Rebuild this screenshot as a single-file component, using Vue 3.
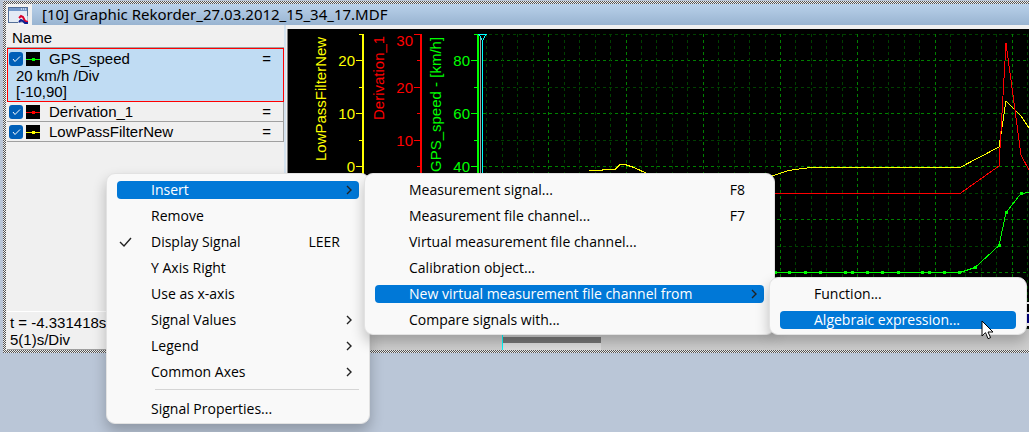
<script setup>
const signals = [
  { name: 'GPS_speed', color: '#00ff00', selected: true, details: ['20 km/h /Div', '[-10,90]'] },
  { name: 'Derivation_1', color: '#ff0000' },
  { name: 'LowPassFilterNew', color: '#ffff00' },
];

const mainMenu = [
  { label: 'Insert', sub: true, active: true },
  { label: 'Remove' },
  { label: 'Display Signal', key: 'LEER', checked: true },
  { label: 'Y Axis Right' },
  { label: 'Use as x-axis' },
  { label: 'Signal Values', sub: true },
  { label: 'Legend', sub: true },
  { label: 'Common Axes', sub: true },
  { label: 'Signal Properties...', separated: true },
];

const insertMenu = [
  { label: 'Measurement signal...', key: 'F8' },
  { label: 'Measurement file channel...', key: 'F7' },
  { label: 'Virtual measurement file channel...' },
  { label: 'Calibration object...' },
  { label: 'New virtual measurement file channel from', sub: true, active: true },
  { label: 'Compare signals with...' },
];

const channelMenu = [
  { label: 'Function...' },
  { label: 'Algebraic expression...', active: true },
];

const menus = [
  { id: 'main', items: mainMenu },
  { id: 'insert', items: insertMenu },
  { id: 'channel', items: channelMenu },
];

// grid lines, every second row and every fifth column is a major one
const rows = [5, 31, 58, 84, 111, 137, 164, 190, 217, 243, 270, 296].map((y, i) => ({
  y,
  major: i % 2 === 1,
}));
const columns = Array.from({ length: 36 }, (_, i) => ({
  x: Math.round(183 + 15.45 * (i + 1)),
  major: (i + 1) % 5 === 0,
}));

const ticks = [5, 31, 58, 84, 111, 137];

const axes = [
  {
    name: 'LowPassFilterNew', color: '#ffff00', x: 75, titleX: 38, titleY: 132, odd: 1,
    labels: [{ text: '20', y: 37 }, { text: '10', y: 90 }, { text: '0', y: 143 }],
  },
  {
    name: 'Derivation_1', color: '#ff0000', x: 133, titleX: 96, titleY: 91, odd: 0,
    labels: [{ text: '30', y: 17 }, { text: '20', y: 64 }, { text: '10', y: 117 }],
  },
  {
    name: 'GPS_speed - [km/h]', color: '#00ff00', x: 190, titleX: 153, titleY: 143, odd: 1,
    labels: [{ text: '80', y: 37 }, { text: '60', y: 90 }, { text: '40', y: 143 }],
  },
];

const samples = [
  [486, 243], [500, 243], [516, 243], [531, 243], [556, 243], [563, 243], [578, 243],
  [593, 243], [609, 243], [633, 243], [640, 243], [655, 243], [670, 243], [686, 238],
  [710, 216], [717, 183], [732, 164],
];
</script>

<template>
  <main class="desktop">
    <section class="window">
      <header class="title-row">
        <svg class="app-icon" width="20" height="20" viewBox="0 0 20 20">
          <rect x="0.5" y="2.500" width="19" height="15" fill="#e4ebf5" stroke="#536f98" />
          <rect x="1" y="3" width="18" height="3" fill="#7599ca" />
          <path d="M13 4h1M15 4h1M17 4h1" stroke="#fff" />
          <path d="M10 11h20v12H10z" fill="#f6f8fc" opacity="0.6" />
          <path d="M11 13l2-2 2 1 2 4 3 1" fill="none" stroke="#d8002c" stroke-width="2" />
          <path d="M11 17l2-2 2 1 2 2h3" fill="none" stroke="#102090" stroke-width="2" />
        </svg>
        <h1 class="title">[10] Graphic Rekorder_27.03.2012_15_34_17.MDF</h1>
      </header>

      <div class="content">
        <aside class="sidebar">
          <div class="list-header">Name</div>
          <div
            v-for="signal in signals"
            :key="signal.name"
            :class="['signal', { selected: signal.selected }]"
          >
            <label class="signal-row">
              <span class="check-box">
                <input type="checkbox" class="signal-check" checked />
                <svg class="check-mark" width="14" height="14" viewBox="0 0 14 14">
                  <path d="M4 7l2 2.500 5-5" />
                </svg>
              </span>
              <svg class="signal-icon" width="14" height="14" viewBox="0 0 14 14">
                <rect width="14" height="14" fill="#000" />
                <path d="M0 7.500h14" :stroke="signal.color" />
                <rect x="6" y="6" width="3" height="3" :fill="signal.color" />
              </svg>
              <span class="signal-name">{{ signal.name }}</span>
              <span>=</span>
            </label>
            <div v-for="line in signal.details" :key="line" class="signal-detail">{{ line }}</div>
          </div>
          <div class="time-info">
            <div>t = -4.331418s</div>
            <div>5(1)s/Div</div>
          </div>
        </aside>

        <div class="plot-area">
          <svg class="plot" viewBox="0 0 741 300" preserveAspectRatio="xMinYMin slice">
            <rect width="741" height="300" fill="#000" />
            <g shape-rendering="crispEdges" stroke-dasharray="3 3">
              <path
                v-for="row in rows"
                :key="row.y"
                :d="`M195 ${row.y + 0.5}H741`"
                :stroke="row.major ? '#008000' : '#004000'"
              />
              <path
                v-for="column in columns"
                :key="column.x"
                :d="`M${column.x + 0.5} 5V300`"
                :stroke="column.major ? '#008000' : '#004000'"
              />
            </g>
            <g v-for="axis in axes" :key="axis.name">
              <g shape-rendering="crispEdges" :stroke="axis.color">
                <path :d="`M${axis.x} 5V300`" stroke-width="2" />
                <path
                  v-for="(tick, i) in ticks"
                  :key="tick"
                  :d="`M${axis.x - (i % 2 === axis.odd ? 7 : 4)} ${tick + 0.5}H${axis.x}`"
                />
              </g>
              <text
                v-for="label in axis.labels"
                :key="label.text"
                :x="axis.x - 8"
                :y="label.y"
                :fill="axis.color"
                text-anchor="end"
              >{{ label.text }}</text>
              <text
                :fill="axis.color"
                :transform="`translate(${axis.titleX} ${axis.titleY}) rotate(-90)`"
              >{{ axis.name }}</text>
            </g>
            <g fill="none" shape-rendering="crispEdges">
              <path d="M192.500 5V300" stroke="#a0a0a0" />
              <path d="M194.500 5V300" stroke="#00ffff" />
              <path d="M191 5.500H198L194.500 12z" fill="#000" stroke="#00ffff" />
              <path
                d="M301 141.500H314L315 140.500H327L332 135.500H337L346 138.500L359 144.500L380 153L420 160L460 153L484 147L501 141.500L514 139.500L525 138.500H672L711 118L718 72L733 87L741 99"
                stroke="#ffff00"
              />
              <path d="M195 164.500H672L711 137L718 14L733 126L741 141" stroke="#ff0000" />
              <path
                d="M195 243.500H672L687 238.500L711 216.500L718 183.500L733 164.500L741 163.500"
                stroke="#00ff00"
              />
            </g>
            <rect
              v-for="point in samples"
              :key="point[0]"
              :x="point[0]"
              :y="point[1] - 1"
              width="3"
              height="3"
              fill="#00ff00"
            />
            <rect x="738" y="273" width="3" height="24" fill="#fff" />
            <rect x="738" y="275" width="3" height="8" fill="#000" />
            <rect x="738" y="285" width="3" height="9" fill="#000080" />
          </svg>
          <div class="scroll-track">
            <div class="scroll-thumb"></div>
          </div>
        </div>
      </div>
    </section>

    <nav v-for="menu in menus" :key="menu.id" :class="['menu', `menu-${menu.id}`]">
      <template v-for="item in menu.items" :key="item.label">
        <hr v-if="item.separated" class="separator" />
        <button type="button" :class="['menu-item', { active: item.active }]">
          <svg v-if="item.checked" class="check" width="14" height="12" viewBox="0 0 14 12">
            <path d="M1 6l4 4 7-8" />
          </svg>
          <span class="menu-label">{{ item.label }}</span>
          <span v-if="item.key" class="shortcut">{{ item.key }}</span>
          <svg v-if="item.sub" class="arrow" width="6" height="10" viewBox="0 0 6 10">
            <path d="M1 1l4 4-4 4" />
          </svg>
        </button>
      </template>
    </nav>

    <svg class="cursor" width="13" height="20" viewBox="0 0 13 20">
      <path d="M1 1v15l3.500-3.300 2.600 6 2.500-1.100-2.600-5.600h5z" fill="#fff" stroke="#000" />
    </svg>
  </main>
</template>

<style>
body {
  margin: 0;
  background: #bac6d7;
}
</style>

<style scoped>
.desktop {
  position: relative;
  min-height: 100vh;
  box-sizing: border-box;
  padding: 1px 0 0 3px;
  overflow: hidden;
  background: #bac6d7;
  color: #000;
  font-family: "Liberation Sans", Arial, sans-serif;
  font-size: 15px;
}

/* dithered window frame */
.window {
  padding: 3px 0 3px 3px;
  background: repeating-conic-gradient(#555 0 25%, #eee 0 50%) 0 0 / 2px 2px;
}

.title-row {
  display: flex;
  height: 21px;
  background: #f0f0f0;
}

.app-icon {
  flex: none;
  margin: 1px 4px 0 2px;
}

.title {
  flex: 1;
  margin: 0;
  padding-left: 10px;
  background: linear-gradient(#b9d1ea, #99b4d1);
  font-family: "Noto Sans", "Segoe UI", sans-serif;
  font-size: 15px;
  font-weight: 400;
  line-height: 21px;
}

.content {
  display: flex;
  background: #f0f0f0;
}

.sidebar {
  display: flex;
  flex: none;
  flex-direction: column;
  box-sizing: border-box;
  width: 280px;
  padding: 2px 0 0 1px;
  border-right: 2px solid #d5e3f0;
}

.list-header {
  height: 20px;
  padding-left: 5px;
  line-height: 22px;
  border-bottom: 1px solid #a0a0a0;
}

.signal {
  padding-left: 2px;
  border: 1px solid #a0a0a0;
  border-width: 0 1px 1px 0;
}

.signal.selected {
  padding: 0 0 1px 1px;
  border: 1px solid #ff0000;
  background: #c0dcf3;
}

.signal-row {
  display: flex;
  align-items: center;
  height: 19px;
  padding-right: 12px;
}

.check-box {
  display: grid;
  margin-right: 3px;
}

.signal-check {
  grid-area: 1 / 1;
  width: 14px;
  height: 14px;
  margin: 0;
  border-radius: 3px;
  appearance: none;
  background: #005fb8;
}

.check-mark {
  grid-area: 1 / 1;
  pointer-events: none;
}

.check-mark path {
  fill: none;
  stroke: #fff;
}

.signal-icon {
  margin-right: 9px;
}

.signal-name {
  flex: 1;
}

.signal-detail {
  padding-left: 7px;
  line-height: 16px;
}

.time-info {
  margin-top: auto;
  padding: 2px 0 1px 3px;
  border-top: 1px solid #fff;
  border-bottom: 1px solid #a0a0a0;
  line-height: 17px;
}

.plot-area {
  display: flex;
  flex: 1;
  flex-direction: column;
  min-width: 0;
  margin: 4px 0 0 1px;
  border-left: 1px solid #808080;
}

.plot {
  width: 100%;
  height: 300px;
}

.scroll-track {
  height: 21px;
  background: #cfcfcf;
}

.scroll-thumb {
  box-sizing: border-box;
  width: 99px;
  height: 21px;
  margin-left: 214px;
  border-left: 1px solid #00ffff;
  background: linear-gradient(#cfcfcf 8px, #777 8px 14px, #e0e0e0 14px);
}

.menu {
  position: absolute;
  box-sizing: border-box;
  padding: 3px 10px 1px;
  border: 1px solid #e2e2e2;
  border-radius: 9px;
  background: #f9f9f9;
  box-shadow: 0 7px 14px rgba(0, 0, 0, 0.24);
}

.menu-main {
  top: 173px;
  left: 106px;
  width: 264px;
}

.menu-insert {
  top: 173px;
  left: 364px;
  width: 411px;
}

.menu-channel {
  top: 277px;
  left: 769px;
  width: 258px;
}

.menu-item {
  position: relative;
  display: flex;
  align-items: center;
  width: 100%;
  height: 18px;
  margin: 4px 0;
  padding: 0 7px 0 34px;
  border: 0;
  border-radius: 4px;
  background: none;
  color: #000;
  font-family: "Open Sans", "Segoe UI", sans-serif;
  font-size: 14px;
  line-height: 18px;
  text-align: left;
  white-space: nowrap;
}

.menu-item + .menu-item {
  margin-top: 8px;
}

.menu-item.active {
  background: #0078d7;
  color: #fff;
}

.menu-label {
  flex: 1;
}

.shortcut {
  margin-right: 12px;
}

.arrow path,
.check path {
  fill: none;
  stroke: #222;
  stroke-width: 1.4;
}

.check {
  position: absolute;
  left: 2px;
}

.separator {
  height: 1px;
  margin: 8px 0 10px 38px;
  border: 0;
  background: #d5d5d5;
}

.cursor {
  position: absolute;
  top: 320px;
  left: 981px;
}
</style>
